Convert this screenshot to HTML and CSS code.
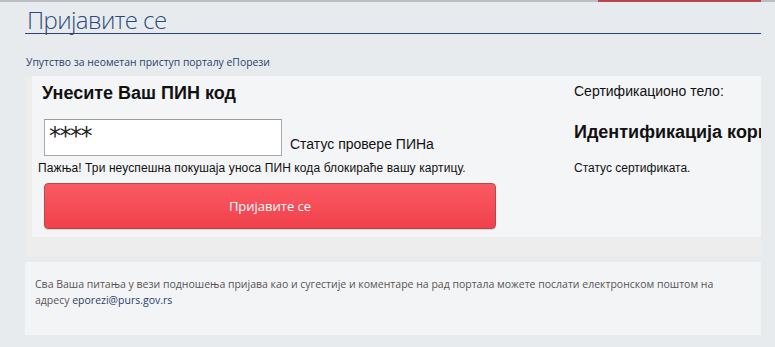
FILE: index.html
```html
<!DOCTYPE html>
<html lang="sr">
<head>
    <meta charset="UTF-8">
    <meta name="viewport" content="width=device-width, initial-scale=1.0">
    <title>Пријавите се - еПорези</title>
    <link rel="stylesheet" href="styles.css">
</head>
<body>
    <div class="top-bar">
        <span class="top-bar-accent"></span>
    </div>

    <div class="page">
        <h1 class="page-title">Пријавите се</h1>

        <a class="help-link" href="#">Упутство за неометан приступ порталу еПорези</a>

        <div class="login-box">
            <div class="login-panel">
                <div class="pin-column">
                    <h2 class="pin-heading">Унесите Ваш ПИН код</h2>
                    <div class="pin-row">
                        <input class="pin-input" type="text" value="****">
                        <span class="pin-status">Статус провере ПИНа</span>
                    </div>
                    <p class="pin-warning">Пажња! Три неуспешна покушаја уноса ПИН кода блокираће вашу картицу.</p>
                    <button class="login-button">Пријавите се</button>
                </div>
                <div class="cert-column">
                    <p class="cert-label">Сертификационо тело:</p>
                    <h2 class="cert-heading">Идентификација корисника</h2>
                    <p class="cert-status">Статус сертификата.</p>
                </div>
            </div>
        </div>

        <div class="contact-box">
            Сва Ваша питања у вези подношења пријава као и сугестије и коментаре на рад портала можете послати електронском поштом на адресу <a href="#">eporezi@purs.gov.rs</a>
        </div>
    </div>
</body>
</html>
```

FILE: styles.css
```css
body {
    margin: 0;
    background: #e8ebee;
    font-family: "Open Sans", sans-serif;
    overflow: hidden;
}

.top-bar {
    height: 2px;
    background: #babdc1;
    position: relative;
}

.top-bar-accent {
    position: absolute;
    left: 598px;
    top: 0;
    width: 163px;
    height: 2px;
    background: #b8474c;
}

.page {
    width: 736px;
    margin-left: 25px;
}

.page-title {
    margin: 0;
    padding: 4px 0 0 2px;
    height: 27px;
    font-size: 24px;
    font-weight: 300;
    line-height: 27px;
    letter-spacing: -0.6px;
    color: #2c4b7a;
    border-bottom: 1px solid #2e4472;
}

.help-link {
    display: block;
    margin: 20px 0 0 1px;
    font-size: 10.4px;
    line-height: 16px;
    color: #2d3e6a;
    text-decoration: none;
}

.login-box {
    margin-top: 6px;
    padding: 0 0 20px 7px;
    background: #ededed;
}

.login-panel {
    display: flex;
    height: 161px;
    background: #f4f5f7;
    font-family: Arial, "Liberation Sans", sans-serif;
    color: #111;
}

.pin-column {
    width: 536px;
    padding-left: 6px;
}

.pin-heading {
    margin: 6px 0 0 4px;
    font-size: 18px;
    line-height: 22px;
}

.pin-row {
    display: flex;
    align-items: flex-end;
    margin: 15px 0 0 6px;
}

.pin-input {
    box-sizing: border-box;
    width: 238px;
    height: 37px;
    margin: 0;
    padding: 0 4px 3px;
    border: 1px solid #a9a9a9;
    border-top-color: #999;
    background: #fff;
    font-family: "DejaVu Sans", sans-serif;
    font-size: 24px;
    letter-spacing: -1.5px;
    color: #222;
}

.pin-status {
    margin: 0 0 4px 8px;
    font-size: 14px;
    line-height: 16px;
}

.pin-warning {
    margin: 4px 0 0;
    font-size: 12px;
    line-height: 16px;
    letter-spacing: 0.1px;
}

.login-button {
    display: block;
    width: 452px;
    height: 46px;
    margin: 7px 0 0 6px;
    border: 1px solid #b8474d;
    border-radius: 4px;
    background: linear-gradient(#fb5a63, #f0414c);
    box-shadow: 0 1px 1px rgba(0,0,0,0.15);
    font-family: "Open Sans", sans-serif;
    font-size: 13px;
    color: #fff;
}

.cert-column {
    flex: 1;
    min-width: 0;
    overflow: hidden;
    white-space: nowrap;
}

.cert-label {
    margin: 7px 0 0;
    font-size: 14px;
    line-height: 16px;
}

.cert-heading {
    margin: 22px 0 0;
    font-size: 18px;
    line-height: 22px;
}

.cert-status {
    margin: 17px 0 0;
    font-size: 12px;
    line-height: 16px;
}

.contact-box {
    height: 46px;
    margin-top: 5px;
    padding: 14px 40px 13px 10px;
    background: #f3f4f6;
    font-size: 10.5px;
    line-height: 16px;
    color: #555;
}

.contact-box a {
    color: #2d3e6a;
    text-decoration: none;
}
```
